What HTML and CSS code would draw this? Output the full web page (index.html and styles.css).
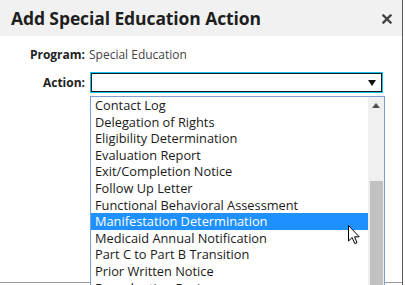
FILE: index.html
```html
<!DOCTYPE html>
<html>
<head>
<meta charset="utf-8">
<link rel="stylesheet" href="styles.css">
</head>
<body>
<div class="dialog">
  <div class="header">
    <div class="title">Add Special Education Action</div>
    <svg class="close" width="10" height="10" viewBox="0 0 10 10"><path d="M1.5 1.5 L8.5 8.5 M8.5 1.5 L1.5 8.5" stroke="#444" stroke-width="2.4" stroke-linecap="square"/></svg>
  </div>
  <div class="body">
    <div class="form">
      <div class="label">Program:</div>
      <div class="value">Special Education</div>
      <div class="label action-label">Action:</div>
      <div class="select">
        <svg class="down" width="8" height="6" viewBox="0 0 8 6"><path d="M0 0 H8 L4 6 Z" fill="#111"/></svg>
      </div>
    </div>
    <div class="dropdown">
      <ul class="items">
        <li>Contact Log</li>
        <li>Delegation of Rights</li>
        <li>Eligibility Determination</li>
        <li>Evaluation Report</li>
        <li>Exit/Completion Notice</li>
        <li>Follow Up Letter</li>
        <li>Functional Behavioral Assessment</li>
        <li class="selected">Manifestation Determination</li>
        <li>Medicaid Annual Notification</li>
        <li>Part C to Part B Transition</li>
        <li>Prior Written Notice</li>
        <li>Reevaluation Review</li>
      </ul>
      <div class="scrollbar">
        <svg class="up" width="8" height="5" viewBox="0 0 8 5"><path d="M0 5 H8 L4 0 Z" fill="#505050"/></svg>
        <div class="thumb"></div>
      </div>
    </div>
    <svg class="cursor" width="13" height="20" viewBox="0 0 13 20"><path d="M0.5 0.5 L0.5 16 L4.2 12.6 L6.8 18.6 L9 17.6 L6.5 11.8 L11.2 11.8 Z" fill="#fff" stroke="#000" stroke-width="1" stroke-linejoin="miter"/></svg>
  </div>
</div>
</body>
</html>
```
FILE: styles.css
```css
html, body {
  margin: 0;
  padding: 0;
  background: #fff;
  font-family: "Open Sans", "Liberation Sans", sans-serif;
  overflow: hidden;
}
.dialog {
  width: 402px;
  height: 285px;
  border-right: 1px solid #5a5a5a;
  background: #fff;
  position: relative;
  overflow: hidden;
}
.header {
  height: 36px;
  background: #f1f1f1;
  display: flex;
  align-items: center;
  justify-content: space-between;
  padding: 0 10px 0 11px;
}
.title {
  font-size: 17.5px;
  font-weight: 700;
  color: #1e1e1e;
  letter-spacing: -0.1px;
}
.close {
  display: block;
  margin-top: 1px;
}
.body {
  height: 246px;
  border-bottom: 1px solid #9a9a9a;
  position: relative;
}
.form {
  display: grid;
  grid-template-columns: 85px 1fr;
  column-gap: 4px;
  row-gap: 9px;
  padding-top: 10px;
  align-items: center;
}
.label {
  font-size: 12px;
  font-weight: 700;
  color: #222;
  text-align: right;
  line-height: 18px;
}
.value {
  font-size: 12px;
  color: #444;
  line-height: 18px;
}
.action-label {
  margin-top: 1px;
}
.select {
  width: 284px;
  height: 17px;
  margin-left: 2px;
  border: 1px solid #1a1a1a;
  box-shadow: 0 0 0 1px #12c2f0;
  display: flex;
  align-items: center;
  justify-content: flex-end;
  padding-right: 5px;
  box-sizing: content-box;
}
.down {
  display: block;
  margin-top: 1px;
}
.dropdown {
  position: absolute;
  left: 90px;
  top: 60px;
  width: 293px;
  height: 240px;
  border: 1px solid #7d9fd6;
  background: #fff;
  display: flex;
}
.items {
  list-style: none;
  margin: 0;
  padding: 0;
  flex: 1;
}
.items li {
  height: 16.6px;
  line-height: 16.6px;
  font-size: 12.8px;
  color: #1a1a1a;
  padding-left: 4px;
  white-space: nowrap;
  overflow: hidden;
}
.items li.selected {
  background: #1e90ff;
  color: #fff;
}
.scrollbar {
  width: 16px;
  background: #f0f0f0;
  display: flex;
  flex-direction: column;
  align-items: center;
}
.up {
  display: block;
  margin-top: 6px;
}
.thumb {
  margin-top: 73px;
  width: 13px;
  margin-left: 1px;
  flex: 1;
  background: #c1c1c1;
}
.cursor {
  position: absolute;
  left: 348px;
  top: 189px;
}
```
